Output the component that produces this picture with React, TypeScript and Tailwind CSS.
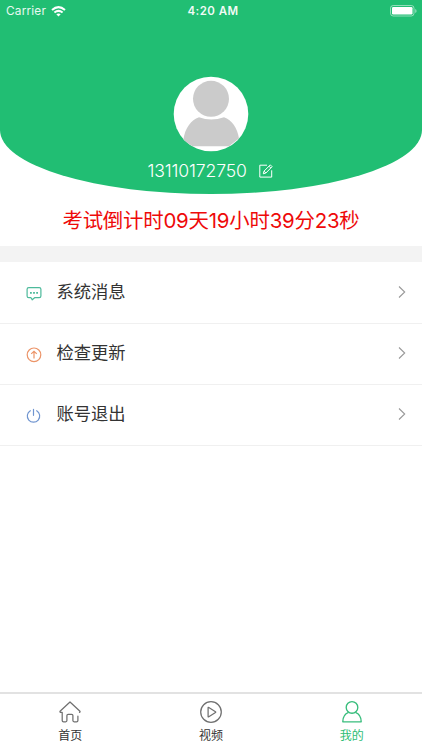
import React from 'react';

const MessageIcon = () => (
  <svg width="16" height="16" viewBox="0 0 16 16" fill="none" stroke="#4dba9b" strokeWidth="1.2" strokeLinejoin="round">
    <path d="M2.8 1.600h10.400a1.700 1.700 0 0 1 1.700 1.700v6.700a1.700 1.700 0 0 1-1.700 1.700H8.600L6.200 13.800 5 11.700H2.800a1.700 1.700 0 0 1-1.700-1.700V3.300a1.700 1.700 0 0 1 1.700-1.700Z" />
    <path d="M4 6.900h1.800M7.100 6.900h1.800M10.200 6.900h1.800" strokeWidth="1.900" />
  </svg>
);

const UpdateIcon = () => (
  <svg width="16" height="16" viewBox="0 0 16 16" fill="none" stroke="#ec9468" strokeWidth="1.2">
    <circle cx="8" cy="7.800" r="6.800" />
    <path d="M8 11.400V4.600M5.200 6.900 8 4.400 10.800 6.900" />
  </svg>
);

const PowerIcon = () => (
  <svg width="16" height="16" viewBox="0 0 16 16" fill="none" stroke="#7095d0" strokeWidth="1.2" strokeLinecap="round">
    <path d="M4.300 2.700A6.200 6.200 0 1 0 10.700 2.700M7.500 1.300v6" />
  </svg>
);

const rows = [
  { label: '系统消息', Icon: MessageIcon },
  { label: '检查更新', Icon: UpdateIcon },
  { label: '账号退出', Icon: PowerIcon },
];

const HomeIcon = () => (
  <svg width="24" height="24" viewBox="0 0 24 24" fill="none" stroke="#707070" strokeWidth="1.25" strokeLinejoin="round" strokeLinecap="round">
    <path d="M4.2 12.4H2.5Q1.4 12 2.3 11L12 2l9.7 9q.9 1-.2 1.4M4.2 12.4v8q0 1.4 1.4 1.4h2.1q1.2 0 1.2-1.2v-5q0-1.2 1.2-1.2h3.6q1.2 0 1.2 1.2v5q0 1.2 1.2 1.2h2.4q1.4 0 1.4-1.4v-4.2" />
  </svg>
);

const VideoIcon = () => (
  <svg width="24" height="24" viewBox="0 0 24 24" fill="none" stroke="#707070" strokeWidth="1.25" strokeLinejoin="round">
    <circle cx="12" cy="12" r="10.3" />
    <path d="M9.1 7.8v8.6q0 .7.7.3l6.7-4.2q.6-.4 0-.8L9.8 7.5q-.7-.4-.7.3Z" />
  </svg>
);

const UserIcon = () => (
  <svg width="24" height="24" viewBox="0 0 24 24" fill="none" stroke="#38bd7c" strokeWidth="1.35" strokeLinejoin="round">
    <circle cx="12" cy="7.4" r="5.8" />
    <path d="M8.6 12.4C5 13.8 2.8 17.3 2.8 21.8h18.4c0-4.5-2.2-8-5.8-9.4" />
  </svg>
);

const tabs = [
  { label: '首页', Icon: HomeIcon, color: 'text-[#333]' },
  { label: '视频', Icon: VideoIcon, color: 'text-[#333]' },
  { label: '我的', Icon: UserIcon, color: 'text-[#2dbd74]' },
];

export default function App() {
  return (
    <div className="flex h-[750px] w-full flex-col overflow-hidden bg-white font-['Inter','Noto_Sans_CJK_SC',sans-serif]">
      <header className="flex h-[194px] shrink-0 flex-col items-center rounded-b-[50%_64px] bg-[#21be73]">
        <div className="grid h-[22px] w-full grid-cols-3 items-center pl-[6px] pr-[5px] text-white">
          <div className="flex items-center gap-[5px]">
            <span className="text-[11.800px] leading-[22px] tracking-[0.200px] text-white/90">Carrier</span>
            <svg width="15" height="11" viewBox="0 0 15 11" fill="none" stroke="white" strokeWidth="2">
              <path d="M1 4Q7.5-1.8 14 4M3.4 6.6q4.1-3.4 8.2 0" />
              <path d="M5.3 8.3q2.2-1.6 4.4 0L7.5 10.6Z" fill="white" stroke="none" />
            </svg>
          </div>
          <span className="pl-[3px] text-center text-[11.500px] font-semibold leading-[22px] tracking-[0.450px] text-white/95">4:20 AM</span>
          <svg className="justify-self-end" width="27" height="12" viewBox="0 0 27 12">
            <rect x=".5" y=".5" width="23.5" height="10.5" rx="2.7" fill="none" stroke="white" strokeOpacity=".5" />
            <rect x="2" y="2" width="20.5" height="7.5" rx="1.2" fill="white" />
            <path d="M25.2 4v4q1.4-.6 1.4-2t-1.4-2Z" fill="white" fillOpacity=".5" />
          </svg>
        </div>
        <svg className="mt-[54px] shrink-0" width="76" height="76" viewBox="0 0 76 76">
          <circle cx="38" cy="38" r="37.3" fill="white" />
          <circle cx="38" cy="22.8" r="18" fill="#cbcbcb" />
          <path d="M10.400 63.500C12 52 18 44 26 41.200Q38 46 51 41.200C59 44 64.500 52 66 62.500Q60 67 56 70.300H19.500Q14 67 10.400 63.500Z" fill="#cbcbcb" />
        </svg>
        <div className="mt-[5.500px] flex items-center pr-[2px]">
          <span className="w-[111px] text-[17.600px] font-light leading-[26px] tracking-[-0.150px] text-white">13110172750</span>
          <svg width="14" height="14" viewBox="0 0 14 14" fill="none" stroke="white" strokeWidth="1">
            <path d="M8 1.200H.8v11.900h11.900V6.300M4.300 9.800l.7-2.700 6.300-6.200 1.800 1.800-6.200 6.300ZM10 2.200l1.800 1.800M5 7.100l1.900 1.900" />
          </svg>
        </div>
      </header>
      <p className="h-[52px] shrink-0 text-center text-[20.400px] leading-[54px] tracking-[-0.200px] text-[#ee0a0a]">
        考试倒计时09天19小时39分23秒
      </p>
      <div className="h-4 shrink-0 bg-[#f3f3f3]" />
      <main className="flex-1 pt-px">
        {rows.map(({ label, Icon }) => (
          <div key={label} className="flex h-[61px] items-center border-b border-[#f0f0f0] pl-[26px] pr-[15px]">
            <div className="mt-[2px]"><Icon /></div>
            <span className="-mt-[3px] ml-[14.500px] flex-1 text-[17.300px] leading-6 text-[#333]">{label}</span>
            <svg className="-mt-[3px]" width="10" height="14" viewBox="0 0 10 14" fill="none" stroke="#999" strokeWidth="1.100">
              <path d="m2 1.500 5.700 5.500L2 12.500" />
            </svg>
          </div>
        ))}
      </main>
      <nav className="grid h-[58px] shrink-0 grid-cols-3 border-t-2 border-[#e2e2e2] bg-white">
        {tabs.map(({ label, Icon, color }) => (
          <div key={label} className={`flex flex-col items-center pt-[6px] ${color}`}>
            <Icon />
            <span className="mt-[3px] text-[12px] leading-[18px]">{label}</span>
          </div>
        ))}
      </nav>
    </div>
  );
}
